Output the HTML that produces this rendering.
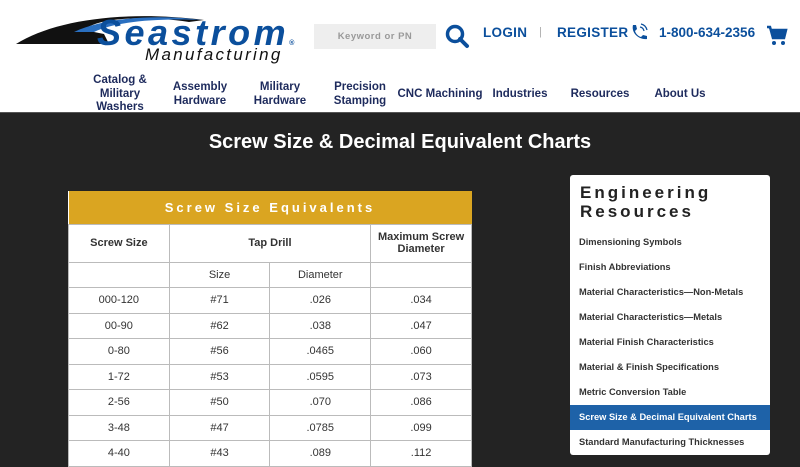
<!DOCTYPE html>
<html><head><style>
*{margin:0;padding:0;box-sizing:border-box}
body{width:800px;height:450px;overflow:hidden;background:#232323;font-family:"Liberation Sans",sans-serif;position:relative}
.hdr{position:absolute;left:0;top:0;width:800px;height:113px;background:#fff;border-bottom:1px solid #555}
.nav{position:absolute;font-weight:bold;font-size:11.5px;color:#1d2a5c;text-align:center;line-height:13.5px}
.top{position:absolute;font-weight:bold;color:#0b4f9c;font-size:13.5px;top:25px;letter-spacing:.3px}
h1{position:absolute;left:0;width:800px;top:131px;text-align:center;color:#fff;font-size:20px;font-weight:bold}
table{position:absolute;left:68px;top:191px;width:404px;border-collapse:collapse;background:#fff;font-size:11px;color:#333}
td{border:1px solid #bbb;text-align:center;height:25.5px}
.cap{background:#daa521;color:#fff;font-weight:bold;font-size:13px;letter-spacing:3px;height:33px;border:none}
.side{position:absolute;left:570px;top:175px;width:200px;height:280px;background:#fff;border-radius:3px}
.side h2{font-size:17px;letter-spacing:3px;color:#222;margin:8px 0 0 10px;line-height:19px}
.side div{position:absolute;left:0;width:200px;height:25px;line-height:25px;padding-left:9px;font-size:9.3px;font-weight:bold;color:#333}
</style></head><body>
<div class="hdr">
<svg style="position:absolute;left:14px;top:10px" width="190" height="40"><path d="M2 34 C40 10 110 0 190 10 L175 12 C120 4 80 10 70 20 L90 24 L95 34 Z" fill="#111"/><path d="M60 22 C90 8 140 4 188 10 C140 8 100 12 80 22Z" fill="#2a6fc0"/></svg>
<div style="position:absolute;left:97px;top:15px;font-size:36px;line-height:36px;font-weight:bold;font-style:italic;color:#0b4f9c;letter-spacing:3.5px">Seastrom<span style="font-size:7px;letter-spacing:0">®</span></div>
<div style="position:absolute;left:145px;top:45px;font-size:17px;font-style:italic;color:#111;letter-spacing:2.3px">Manufacturing</div>
<div style="position:absolute;left:314px;top:24px;width:122px;height:25px;background:#eee;color:#999;font-size:9.5px;font-weight:bold;line-height:25px;text-align:center;letter-spacing:.5px">Keyword or PN</div>
<svg style="position:absolute;left:445px;top:24px" width="26" height="26"><circle cx="10" cy="10" r="7.5" stroke="#0b4f9c" stroke-width="3.5" fill="none"/><path d="M15 15 L22 22" stroke="#0b4f9c" stroke-width="4" stroke-linecap="round"/></svg>
<div class="top" style="left:483px">LOGIN</div>
<div style="position:absolute;left:539px;top:26px;color:#aaa;font-size:11px">|</div>
<div class="top" style="left:557px">REGISTER</div>
<svg style="position:absolute;left:629px;top:23px" width="20" height="18"><path d="M4 2 L7 2 L8 6 L6 8 C7 11 9 13 12 14 L14 12 L18 13 L18 16 C10 17 2 10 4 2Z" fill="#0b4f9c"/><path d="M11 4 A5 5 0 0 1 15 8 M12 1 A8 8 0 0 1 18 7" stroke="#0b4f9c" stroke-width="1.3" fill="none"/></svg>
<div class="top" style="left:659px;letter-spacing:0">1-800-634-2356</div>
<svg style="position:absolute;left:766px;top:25px" width="22" height="22"><path d="M1 2 L4 2 L7 13 L18 13 L20 5 L5 5" stroke="#0b4f9c" stroke-width="2.5" fill="#0b4f9c"/><circle cx="8" cy="18" r="2" fill="#0b4f9c"/><circle cx="17" cy="18" r="2" fill="#0b4f9c"/></svg>
<div class="nav" style="left:86px;top:74px;width:68px">Catalog &amp;<br>Military<br>Washers</div>
<div class="nav" style="left:166px;top:81px;width:68px">Assembly<br>Hardware</div>
<div class="nav" style="left:246px;top:81px;width:68px">Military<br>Hardware</div>
<div class="nav" style="left:326px;top:81px;width:68px">Precision<br>Stamping</div>
<div class="nav" style="left:395px;top:88px;width:90px">CNC Machining</div>
<div class="nav" style="left:490px;top:88px;width:60px">Industries</div>
<div class="nav" style="left:570px;top:88px;width:60px">Resources</div>
<div class="nav" style="left:650px;top:88px;width:60px">About Us</div>
</div>
<h1>Screw Size &amp; Decimal Equivalent Charts</h1>
<table>
<tr><td colspan="4" class="cap">Screw Size Equivalents</td></tr>
<tr><td style="height:38px;font-weight:bold;width:101px">Screw Size</td><td colspan="2" style="font-weight:bold">Tap Drill</td><td style="font-weight:bold;width:101px">Maximum Screw<br>Diameter</td></tr>
<tr><td></td><td style="width:101px">Size</td><td style="width:101px">Diameter</td><td></td></tr>
<tr><td>000-120</td><td>#71</td><td>.026</td><td>.034</td></tr>
<tr><td>00-90</td><td>#62</td><td>.038</td><td>.047</td></tr>
<tr><td>0-80</td><td>#56</td><td>.0465</td><td>.060</td></tr>
<tr><td>1-72</td><td>#53</td><td>.0595</td><td>.073</td></tr>
<tr><td>2-56</td><td>#50</td><td>.070</td><td>.086</td></tr>
<tr><td>3-48</td><td>#47</td><td>.0785</td><td>.099</td></tr>
<tr><td>4-40</td><td>#43</td><td>.089</td><td>.112</td></tr>
</table>
<div class="side">
<h2>Engineering<br>Resources</h2>
<div style="top:55px">Dimensioning Symbols</div>
<div style="top:80px">Finish Abbreviations</div>
<div style="top:105px">Material Characteristics—Non-Metals</div>
<div style="top:130px">Material Characteristics—Metals</div>
<div style="top:155px">Material Finish Characteristics</div>
<div style="top:180px">Material &amp; Finish Specifications</div>
<div style="top:205px">Metric Conversion Table</div>
<div style="top:230px;background:#1e62a8;color:#fff">Screw Size &amp; Decimal Equivalent Charts</div>
<div style="top:255px">Standard Manufacturing Thicknesses</div>
</div>
</body></html>
